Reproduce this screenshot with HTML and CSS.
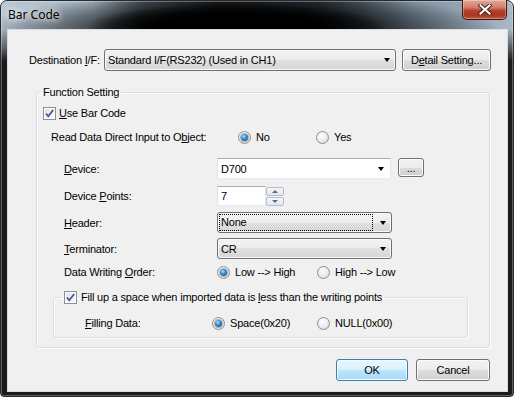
FILE: index.html
```html
<!DOCTYPE html>
<html lang="en">
  <head>
    <meta charset="utf-8">
    <title>Bar Code</title>
    <link rel="stylesheet" href="styles.css">
  </head>
  <body>
    <!-- Ventana del diálogo -->
    <div class="window">
      <div class="titlebar">
        <span class="title">Bar Code</span>
        <button class="close" title="Close">
          <svg width="14" height="11" viewBox="0 0 14 11">
            <path d="M2.5 1.5 L11.5 9.5 M11.5 1.5 L2.5 9.5" stroke="#3a1d18" stroke-width="4" stroke-linecap="square"/>
            <path d="M2.5 1.5 L11.5 9.5 M11.5 1.5 L2.5 9.5" stroke="#fff" stroke-width="2.2" stroke-linecap="square"/>
          </svg>
        </button>
      </div>

      <div class="client">
        <!-- Destino -->
        <div class="dest-row">
          <span class="dest-label">Destination <u>I</u>/F:</span>
          <div class="combo dest-combo"><span>Standard I/F(RS232) (Used in CH1)</span><i class="arrow"></i></div>
          <button class="btn detail-btn">D<u>e</u>tail Setting...</button>
        </div>

        <!-- Grupo de funciones -->
        <fieldset class="group">
          <legend>Function Setting</legend>

          <div class="row r-use">
            <span class="check"><svg width="11" height="11" viewBox="0 0 11 11"><path d="M2 5.5 L4.3 8.3 L9.2 2" fill="none" stroke="#4a5f97" stroke-width="1.9"/></svg></span>
            <span><u>U</u>se Bar Code</span>
          </div>

          <div class="row r-read">
            <span class="label read-label">Read Data Direct Input to O<u>b</u>ject:</span>
            <span class="radio-item w-no"><span class="radio on"></span>No</span>
            <span class="radio-item"><span class="radio"></span>Yes</span>
          </div>

          <div class="row r-device">
            <span class="label field-label"><u>D</u>evice:</span>
            <div class="edit-combo"><span>D700</span><i class="arrow"></i></div>
            <button class="btn dots-btn">...</button>
          </div>

          <div class="row r-points">
            <span class="label field-label">Device <u>P</u>oints:</span>
            <div class="spin">
              <span class="spin-field">7</span>
              <span class="spin-btns">
                <span class="spin-btn"><i class="up"></i></span>
                <span class="spin-btn"><i class="down"></i></span>
              </span>
            </div>
          </div>

          <div class="row r-header">
            <span class="label field-label"><u>H</u>eader:</span>
            <div class="combo small-combo"><span class="focus">None</span><i class="arrow"></i></div>
          </div>

          <div class="row r-term">
            <span class="label field-label"><u>T</u>erminator:</span>
            <div class="combo small-combo"><span>CR</span><i class="arrow"></i></div>
          </div>

          <div class="row r-order">
            <span class="label field-label">Data Writing <u>O</u>rder:</span>
            <span class="radio-item w-low"><span class="radio on"></span>Low --&gt; High</span>
            <span class="radio-item"><span class="radio"></span>High --&gt; Low</span>
          </div>

          <fieldset class="subgroup">
            <legend>
              <span class="check"><svg width="11" height="11" viewBox="0 0 11 11"><path d="M2 5.5 L4.3 8.3 L9.2 2" fill="none" stroke="#4a5f97" stroke-width="1.9"/></svg></span>
              <span>Fill up a space when imported data is <u>l</u>ess than the writing points</span>
            </legend>
            <div class="row r-fill">
              <span class="label fill-label"><u>F</u>illing Data:</span>
              <span class="radio-item w-space"><span class="radio on"></span>Space(0x20)</span>
              <span class="radio-item"><span class="radio"></span>NULL(0x00)</span>
            </div>
          </fieldset>
        </fieldset>

        <!-- Botones -->
        <div class="dialog-buttons">
          <button class="btn btn-default">OK</button>
          <button class="btn btn-cancel">Cancel</button>
        </div>
      </div>
    </div>
  </body>
</html>
```

FILE: styles.css
```css
/* Reseteo */
* {
  margin: 0;
  padding: 0;
  box-sizing: border-box;
}

body {
  background: #fff;
  font-family: "Liberation Sans", Arial, sans-serif;
  font-size: 11px;
  letter-spacing: -0.2px;
  color: #000;
}

u {
  text-decoration: underline;
  text-underline-offset: 1px;
}

/* Marco de la ventana (Aero) */
.window {
  width: 514px;
  height: 397px;
  border: 1px solid #262a2e;
  border-radius: 7px 7px 4px 4px;
  padding: 0 5px 4px 6px;
  background:
    linear-gradient(to bottom, rgba(30, 30, 30, 0) 0, rgba(30, 30, 30, 0) 28px, #1b1b1b 60px),
    radial-gradient(ellipse 150px 24px at 235px 26px, #000 0, #000 55%, rgba(0, 0, 0, 0) 100%),
    radial-gradient(ellipse 260px 40px at 240px 30px, rgba(0, 0, 0, 0.9) 0, rgba(0, 0, 0, 0.7) 50%, rgba(0, 0, 0, 0) 100%),
    linear-gradient(to right, #b9c8d5 0, #a6b7c5 18%, #4e5963 28%, #202428 42%, #2e363e 62%, #7f91a1 80%, #a9b8c6 100%);
  box-shadow: inset 0 0 0 1px rgba(255, 255, 255, 0.3);
}

.titlebar {
  height: 28px;
  display: flex;
  justify-content: space-between;
  align-items: flex-start;
  padding-left: 1px;
}

.title {
  font-family: "Noto Sans", "Open Sans", sans-serif;
  font-size: 12px;
  line-height: 16px;
  letter-spacing: 0;
  padding-top: 6px;
  text-shadow: 0 0 6px #fff, 0 0 10px rgba(255, 255, 255, 0.9);
}

.close {
  width: 45px;
  height: 20px;
  margin-top: -1px;
  margin-right: 1px;
  border: 1px solid #3d1712;
  border-top: none;
  border-radius: 0 0 5px 5px;
  background: linear-gradient(#e2a898 0, #d07e6a 40%, #b94128 55%, #a8361e 80%, #c45a40 100%);
  box-shadow: inset 0 0 0 1px rgba(255, 255, 255, 0.3);
  display: flex;
  align-items: center;
  justify-content: center;
}

/* Área cliente */
.client {
  height: 363px;
  border: 1px solid #d7dde3;
  background: #f0f0f0;
  padding: 19px 17px 0 21px;
}

.dest-row {
  display: flex;
  align-items: center;
  height: 22px;
  margin-right: -1px;
}

.dest-label {
  width: 75px;
  flex-shrink: 0;
}

/* Combos */
.combo {
  display: flex;
  align-items: center;
  justify-content: space-between;
  border: 1px solid #707070;
  border-radius: 3px;
  background: linear-gradient(#f3f3f3 0, #ececec 50%, #e0e0e0 50%, #d6d6d6 100%);
  box-shadow: inset 0 0 0 1px #fafafa;
  padding: 0 5px 0 3px;
  flex-shrink: 0;
}

.dest-combo {
  width: 292px;
  height: 22px;
}

.small-combo {
  width: 175px;
  height: 21px;
}

.arrow {
  width: 0;
  height: 0;
  border-left: 3.5px solid transparent;
  border-right: 3.5px solid transparent;
  border-top: 4px solid #000;
}

.focus {
  width: 152px;
  outline: 1px dotted #000;
  outline-offset: 0;
  line-height: 15px;
  margin-left: -1px;
  padding-left: 1px;
}

.edit-combo {
  display: flex;
  align-items: center;
  justify-content: space-between;
  width: 174px;
  height: 21px;
  background: #fff;
  border: 1px solid;
  border-color: #abadb3 #e3e9ef #e3e9ef #e2e3ea;
  padding: 0 6px 0 3px;
}

/* Botones */
.btn {
  font: inherit;
  letter-spacing: inherit;
  color: #000;
  border: 1px solid #707070;
  border-radius: 3px;
  background: linear-gradient(#f2f2f2 0, #ebebeb 50%, #dddddd 50%, #cfcfcf 100%);
  box-shadow: inset 0 0 0 1px #fcfcfc;
  flex-shrink: 0;
}

.detail-btn {
  width: 89px;
  height: 22px;
  margin-left: 6px;
}

.dots-btn {
  width: 26px;
  height: 19px;
  margin-left: 7px;
  margin-bottom: 2px;
  line-height: 10px;
}

.btn-default {
  width: 72px;
  height: 22px;
  border-color: #3c7fb1;
  background: linear-gradient(#eaf6fd 0, #d9f0fc 50%, #bee6fd 50%, #a7d9f5 100%);
  box-shadow: inset 0 0 0 1px #f4fbff;
}

.btn-cancel {
  width: 74px;
  height: 22px;
}

/* Cuadros de grupo */
.group {
  margin: 14px 0 0 7px;
  border: 1px solid #d5dfe5;
  border-radius: 3px;
  padding: 0 0 9px 0;
  box-shadow: inset 1px 1px 0 #fff, 1px 1px 0 #fff;
}

.group > legend {
  margin-left: 4px;
  padding: 0 2px;
  line-height: 14px;
}

.subgroup {
  margin: 11px 21px 0 16px;
  border: 1px solid #d5dfe5;
  border-radius: 3px;
  padding: 0 0 7px 0;
  box-shadow: inset 1px 1px 0 #fff, 1px 1px 0 #fff;
}

.subgroup > legend {
  margin-left: 8px;
  padding: 0 2px;
  line-height: 14px;
  display: flex;
  align-items: center;
  gap: 4px;
}

/* Filas */
.row {
  display: flex;
  align-items: center;
}

.label {
  flex-shrink: 0;
}

.r-use {
  height: 14px;
  margin: 7px 0 0 6px;
  gap: 3px;
}

.r-read {
  height: 14px;
  margin: 10px 0 0 14px;
}

.read-label {
  width: 187px;
}

.r-device {
  height: 21px;
  margin: 14px 0 0 27px;
}

.r-points {
  height: 20px;
  margin: 7px 0 0 27px;
}

.r-header {
  height: 21px;
  margin: 6px 0 0 27px;
}

.r-term {
  height: 21px;
  margin: 5px 0 0 27px;
}

.r-order {
  height: 14px;
  margin: 6px 0 0 27px;
}

.field-label {
  width: 153px;
}

.r-fill {
  height: 14px;
  margin: 12px 0 0 31px;
}

.fill-label {
  width: 127px;
}

/* Radios y casillas */
.radio-item {
  display: flex;
  align-items: center;
  gap: 5px;
  flex-shrink: 0;
}

.w-no {
  width: 78px;
}

.w-low {
  width: 100px;
}

.w-space {
  width: 105px;
}

.radio {
  width: 13px;
  height: 13px;
  border-radius: 50%;
  border: 1px solid #8e8f8f;
  background: radial-gradient(circle at 40% 35%, #fdfdfd 0, #eeeeee 45%, #d4d4d4 100%);
  display: flex;
  align-items: center;
  justify-content: center;
  flex-shrink: 0;
}

.radio.on::after {
  content: "";
  width: 7px;
  height: 7px;
  border-radius: 50%;
  background: radial-gradient(circle at 40% 35%, #b8def8 0, #3d8ccc 40%, #10477c 100%);
  box-shadow: 0 0 0 1px rgba(20, 60, 100, 0.35);
}

.check {
  width: 13px;
  height: 13px;
  border: 1px solid #8e8f8f;
  background: linear-gradient(135deg, #d8dde6 0, #f2f4f7 60%, #fff 100%);
  box-shadow: inset 0 0 0 1px #fff;
  flex-shrink: 0;
  display: flex;
  align-items: center;
  justify-content: center;
}

.check svg {
  display: block;
}

/* Control de giro */
.spin {
  display: flex;
  width: 67px;
  height: 20px;
}

.spin-field {
  width: 49px;
  height: 20px;
  background: #fff;
  border: 1px solid;
  border-color: #abadb3 #e3e9ef #e3e9ef #e2e3ea;
  padding-left: 3px;
  line-height: 18px;
}

.spin-btns {
  display: flex;
  flex-direction: column;
  gap: 1px;
  width: 18px;
  margin-top: 1px;
}

.spin-btn {
  height: 9px;
  border: 1px solid #b6bfc9;
  border-radius: 2px;
  background: linear-gradient(#f5f6f8, #e3e6ea);
  display: flex;
  align-items: center;
  justify-content: center;
}

.spin-btn .up {
  border-left: 3px solid transparent;
  border-right: 3px solid transparent;
  border-bottom: 3px solid #55698a;
}

.spin-btn .down {
  border-left: 3px solid transparent;
  border-right: 3px solid transparent;
  border-top: 3px solid #55698a;
}

/* Botones del diálogo */
.dialog-buttons {
  display: flex;
  justify-content: flex-end;
  gap: 8px;
  margin-top: 11px;
}
```
